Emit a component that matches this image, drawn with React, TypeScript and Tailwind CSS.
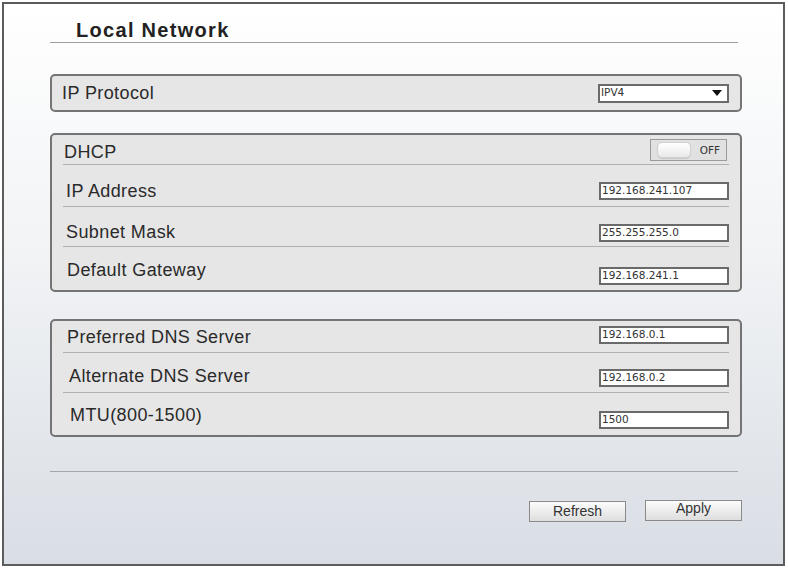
import React from "react"

const SANS = "font-['Liberation_Sans',Arial,sans-serif]"
const SMALL = "font-['DejaVu_Sans',Verdana,sans-serif] text-[10.5px]"
const LABEL = `${SANS} text-[18px] leading-[20px] tracking-[0.4px] text-[#2a2a2a]`

function Field({ value, className = "" }: { value: string; className?: string }) {
  return (
    <div className={`w-[130px] h-[18px] border-2 border-[#6a6a6a] bg-white pl-[1px] flex items-center ${SMALL} text-[#333] ${className}`}>
      {value}
    </div>
  )
}

function Toggle() {
  return (
    <div className="mt-[4px] mr-[2px] w-[77px] h-[22px] border border-[#9a9a9a] bg-[#e1e1e1] flex items-center pl-[6px] pr-[6px]">
      <div className="w-[34px] h-[16px] rounded-[5px] border border-[#d0d0d0] bg-[linear-gradient(180deg,#ffffff,#e9e9e9)] shadow-[0_1px_1px_rgba(0,0,0,0.12)]" />
      <span className={`ml-auto ${SMALL} leading-[14px] text-[#333]`}>OFF</span>
    </div>
  )
}

function Button({ label, className = "" }: { label: string; className?: string }) {
  return (
    <div className={`w-[97px] h-[21px] border-[1.5px] border-[#8a8a8a] bg-[linear-gradient(180deg,#fcfcfc,#dedede)] flex items-center justify-center ${SANS} text-[14px] text-[#333] ${className}`}>
      {label}
    </div>
  )
}

export default function App() {
  return (
    <div className="w-[788px] h-[569px] bg-white overflow-hidden">
      <div className="ml-[2px] mt-[2px] w-[783px] h-[564px] border-2 border-[#5c5c5c] bg-[linear-gradient(180deg,#ffffff_0%,#f1f3f5_45%,#d9dee5_100%)]">
        {/* title */}
        <div className="ml-[46px] mt-[14px] w-[688px] h-[25px] border-b border-[#a0a0a0]">
          <h1 className={`pl-[26px] ${SANS} font-bold text-[20px] leading-[24px] tracking-[1.3px] text-[#222]`}>Local Network</h1>
        </div>

        {/* protocol */}
        <div className="ml-[46px] mt-[31px] w-[692px] h-[38px] border-2 border-[#747474] rounded-[5px] bg-[#e6e6e6] flex items-center justify-between pl-[10px] pr-[11px]">
          <span className={LABEL}>IP Protocol</span>
          <div className={`w-[131px] h-[19px] border-2 border-[#6a6a6a] bg-white flex items-center justify-between pl-[1px] pr-[5px] ${SMALL} text-[#333]`}>
            IPV4
            <svg width="10" height="6" viewBox="0 0 10 6"><polygon points="0,0 10,0 5,6" fill="#111" /></svg>
          </div>
        </div>

        {/* dhcp */}
        <div className="ml-[46px] mt-[21px] w-[692px] h-[159px] border-2 border-[#747474] rounded-[5px] bg-[#e6e6e6]">
          <div className="mx-[11px] h-[30px] border-b border-[#b0b0b0] flex justify-between items-start">
            <span className={`pl-[1px] pt-[7px] ${LABEL}`}>DHCP</span>
            <Toggle />
          </div>
          <div className="mx-[11px] h-[42px] border-b border-[#b0b0b0] flex justify-between items-start">
            <span className={`pl-[3px] pt-[16px] ${LABEL}`}>IP Address</span>
            <Field value="192.168.241.107" className="mt-[17px]" />
          </div>
          <div className="mx-[11px] h-[40px] border-b border-[#b0b0b0] flex justify-between items-start">
            <span className={`pl-[3px] pt-[15px] ${LABEL}`}>Subnet Mask</span>
            <Field value="255.255.255.0" className="mt-[17px]" />
          </div>
          <div className="mx-[11px] h-[43px] flex justify-between items-start">
            <span className={`pl-[4px] pt-[13px] ${LABEL}`}>Default Gateway</span>
            <Field value="192.168.241.1" className="mt-[20px]" />
          </div>
        </div>

        {/* dns */}
        <div className="ml-[46px] mt-[27px] w-[692px] h-[118px] border-2 border-[#747474] rounded-[5px] bg-[#e6e6e6]">
          <div className="mx-[11px] h-[32px] border-b border-[#b0b0b0] flex justify-between items-start">
            <span className={`pl-[4px] pt-[6px] ${LABEL}`}>Preferred DNS Server</span>
            <Field value="192.168.0.1" className="mt-[5px]" />
          </div>
          <div className="mx-[11px] h-[40px] border-b border-[#b0b0b0] flex justify-between items-start">
            <span className={`pl-[6px] pt-[13px] ${LABEL}`}>Alternate DNS Server</span>
            <Field value="192.168.0.2" className="mt-[16px]" />
          </div>
          <div className="mx-[11px] h-[42px] flex justify-between items-start">
            <span className={`pl-[7px] pt-[12px] ${LABEL}`}>MTU(800-1500)</span>
            <Field value="1500" className="mt-[18px]" />
          </div>
        </div>

        <div className="ml-[46px] mt-[34px] w-[688px] h-px bg-[#a4a8ad]" />

        <div className="ml-[46px] mt-[28px] w-[692px] flex justify-end items-start gap-[19px]">
          <Button label="Refresh" className="mt-[1px]" />
          <Button label="Apply" className="pb-[4px]" />
        </div>
      </div>
    </div>
  )
}
